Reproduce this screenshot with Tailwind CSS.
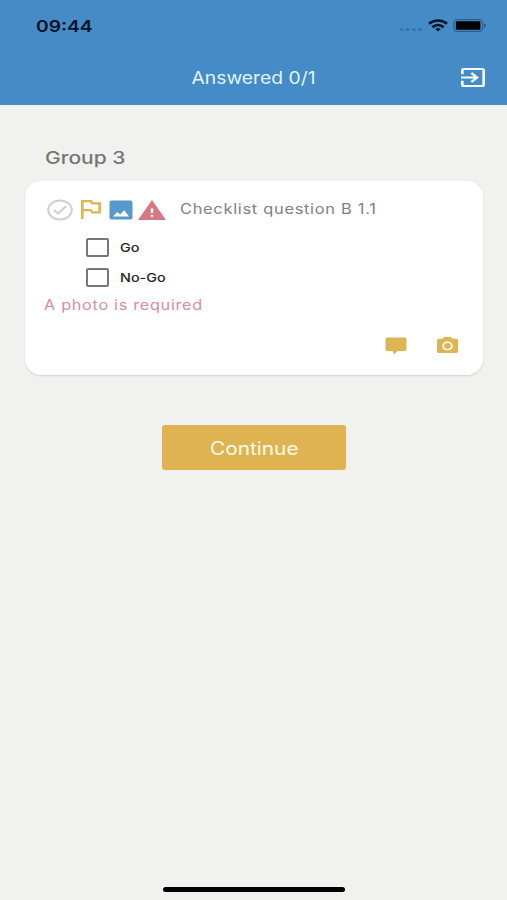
<!DOCTYPE html>
<html lang="en">
<head>
    <meta charset="UTF-8">
    <meta name="viewport" content="width=device-width, initial-scale=1.0">
    <title>Checklist</title>
    <script src="https://cdn.jsdelivr.net/npm/@tailwindcss/browser@4"></script>
</head>
<body class="bg-[#f1f1ef] font-['Inter',sans-serif] w-[507px] h-[900px] flex flex-col overflow-hidden whitespace-nowrap">
    <header class="h-[105px] shrink-0 bg-[#448bc7]">
        <!-- Status bar -->
        <div class="h-[51px] pl-9 pr-[21px] flex items-center justify-between">
            <span class="text-[16px] font-semibold text-[#051226] origin-left scale-x-[1.2]">09:44</span>
            <div class="flex items-center">
                <svg class="w-[24px] h-[5px] mt-[8px] mr-[5px]" viewBox="0 0 24 5" fill="#3672aa">
                    <ellipse cx="2.5" cy="2.5" rx="2" ry="1.6"/>
                    <ellipse cx="8.7" cy="2.5" rx="2" ry="1.6"/>
                    <ellipse cx="14.9" cy="2.5" rx="2" ry="1.6"/>
                    <ellipse cx="21.1" cy="2.5" rx="2" ry="1.6"/>
                </svg>
                <svg class="w-[20px] h-[13px] mr-[5px]" viewBox="0 0 20 13" fill="none" stroke="#051226" stroke-width="2.6">
                    <path d="M1 4.8C6 .3 14 .3 19 4.8"/>
                    <path d="M4.400 8.200C7.600 5.200 12.400 5.200 15.600 8.200"/>
                    <path d="M7.200 10Q10 8 12.800 10L10 12.600Z" fill="#051226" stroke="none"/>
                </svg>
                <svg class="w-[33px] h-[13px]" viewBox="0 0 33 13">
                    <rect x=".7" y=".7" width="29" height="11.6" rx="3.5" fill="none" stroke="#2f5f90" stroke-width="1.3"/>
                    <rect x="2.8" y="2.2" width="24.6" height="8.6" rx="1.2" fill="#000"/>
                    <path d="M31 4.5q2 .4 2 2t-2 2z" fill="#2f5f90"/>
                </svg>
            </div>
        </div>
        <!-- Title bar -->
        <div class="h-[52px] px-[22px] grid grid-cols-[24px_1fr_24px] items-center">
            <span></span>
            <h1 class="pt-[3px] text-[17px] text-[#e2f5ff] text-center scale-x-[1.135]">Answered 0/1</h1>
            <svg class="w-[24px] h-[19px]" viewBox="3 3 18 18" preserveAspectRatio="none" fill="#f2fbff">
                <path d="M10.09 15.59L11.5 17l5-5-5-5-1.41 1.41L12.67 11H3v2h9.67l-2.58 2.59zM19 3H5c-1.11 0-2 .9-2 2v4h2V5h14v14H5v-4H3v4c0 1.1.89 2 2 2h14c1.1 0 2-.9 2-2V5c0-1.1-.9-2-2-2z"/>
            </svg>
        </div>
    </header>

    <main class="pt-[41px] px-[25px] flex flex-col">
        <h2 class="h-[24px] leading-[24px] ml-[20px] self-start text-[17px] font-medium text-[#757575] origin-left scale-x-[1.235]">Group 3</h2>

        <section class="mt-[11px] w-[458px] h-[194px] bg-white rounded-[16px] shadow-[0_1px_2px_rgba(0,0,0,0.13)] flex flex-col">
            <div class="pt-[17px] pl-[22px] h-[40px] flex items-center">
                <svg class="w-[26px] h-[22px]" viewBox="0 0 26 22" fill="none" stroke="#cfcfcf" stroke-width="2">
                    <ellipse cx="13" cy="11" rx="11.8" ry="9.5"/>
                    <path d="M7.200 11.200l3.700 3.200 8.200-7.200"/>
                </svg>
                <svg class="ml-[8px] w-[20px] h-[19px]" viewBox="5 4 15 17" preserveAspectRatio="none" fill="#dfb452">
                    <path d="M14 6l-1-2H5v17h2v-7h5l1 2h7V6h-6zm4 8h-4l-1-2H7V6h5l1 2h5v6z"/>
                </svg>
                <svg class="ml-[8px] w-[24px] h-[20px]" viewBox="0 0 24 20">
                    <rect x=".5" y=".5" width="23" height="19" rx="2" fill="#5699cb"/>
                    <path d="M4 16.5l4.3-4.4 2.9 2.4 4-4.3 4.8 6.3z" fill="#fff"/>
                </svg>
                <svg class="ml-[5px] w-[28px] h-[20px]" viewBox="1 2 22 19" preserveAspectRatio="none" fill="#d77786">
                    <path d="M1 21h22L12 2 1 21zm12-3h-2v-2h2v2zm0-4h-2v-4h2v4z"/>
                </svg>
                <span class="ml-[13.5px] mb-[2px] text-[14px] tracking-[0.6px] text-[#808080] origin-left scale-x-[1.172]">Checklist question B 1.1</span>
            </div>
            <div class="mt-[12px] pl-[61px] flex flex-col gap-[2px]">
                <label class="h-[28px] flex items-center">
                    <span class="w-[23px] h-[19px] border-2 border-[#777] rounded-[2px]"></span>
                    <span class="ml-[11px] pt-[1px] text-[12px] font-medium text-[#262626] origin-left scale-x-[1.2]">Go</span>
                </label>
                <label class="h-[28px] flex items-center">
                    <span class="w-[23px] h-[19px] border-2 border-[#777] rounded-[2px]"></span>
                    <span class="ml-[11px] pt-[1px] text-[12px] font-medium text-[#262626] origin-left scale-x-[1.2]">No-Go</span>
                </label>
            </div>
            <p class="ml-[18.5px] mt-[4px] h-[20px] leading-[20px] self-start text-[14px] tracking-[0.6px] text-[#d98c99] origin-left scale-x-[1.16]">A photo is required</p>
            <div class="mt-[22px] pr-[25px] flex justify-end items-start gap-[30px]">
                <svg class="w-[22px] h-[18px]" viewBox="0 0 22 18" fill="#dfb452">
                    <path d="M2 .5h18q1.500 0 1.500 1.500v10.500q0 1.500-1.500 1.500h-7.500l-3.500 3.500-1.500-3.500H2q-1.500 0-1.500-1.500V2Q.5.5 2 .5z"/>
                </svg>
                <svg class="w-[21px] h-[16px]" viewBox="2 2 20 18" preserveAspectRatio="none" fill="#dfb452">
                    <circle cx="12" cy="12" r="3.200"/>
                    <path d="M9 2L7.170 4H4c-1.100 0-2 .9-2 2v12c0 1.100.9 2 2 2h16c1.100 0 2-.9 2-2V6c0-1.100-.9-2-2-2h-3.170L15 2H9zm3 15c-2.760 0-5-2.240-5-5s2.240-5 5-5 5 2.240 5 5-2.240 5-5 5z"/>
                </svg>
            </div>
        </section>

        <button class="mt-[50px] ml-[137px] w-[184px] h-[45px] rounded-[3px] bg-[#dfb352] text-[18px] text-[#fffbea] flex items-center justify-center">
            <span class="pt-[1px] scale-x-[1.155]">Continue</span>
        </button>
    </main>

    <!-- Home indicator -->
    <div class="mt-auto mb-[8px] ml-[163px] w-[182px] h-[5px] rounded-full bg-black"></div>
</body>
</html>
